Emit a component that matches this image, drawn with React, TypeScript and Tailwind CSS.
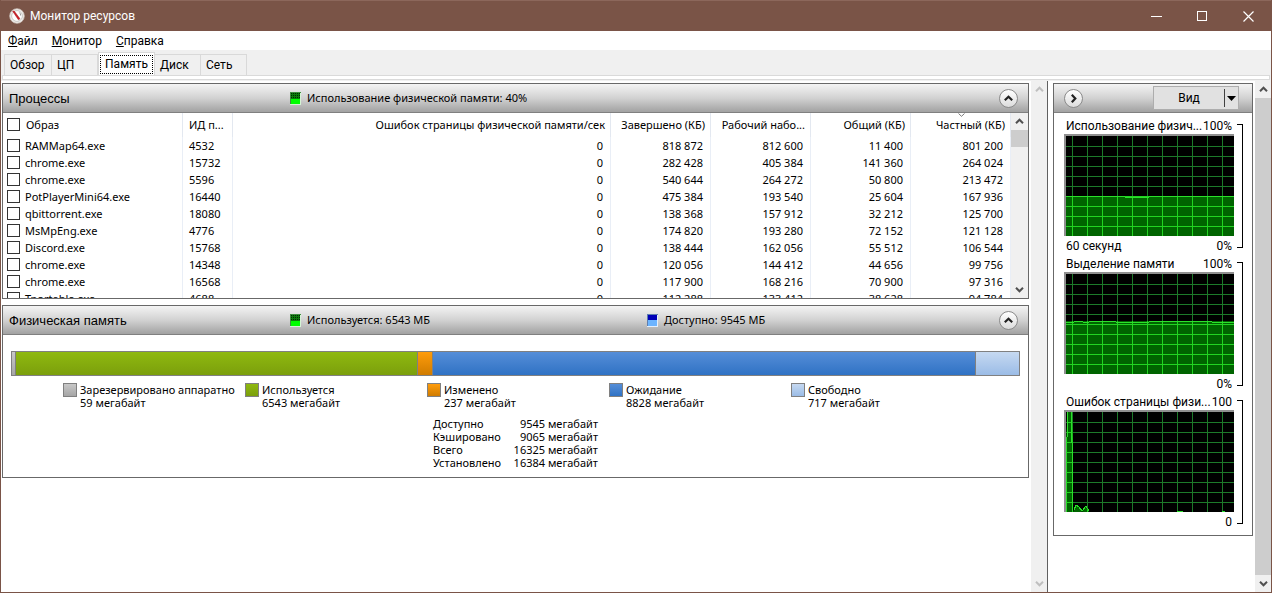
import React from "react";

type Row = [string, string, string, string, string, string, string];

const rows: Row[] = [
  ["RAMMap64.exe", "4532", "0", "818 872", "812 600", "11 400", "801 200"],
  ["chrome.exe", "15732", "0", "282 428", "405 384", "141 360", "264 024"],
  ["chrome.exe", "5596", "0", "540 644", "264 272", "50 800", "213 472"],
  ["PotPlayerMini64.exe", "16440", "0", "475 384", "193 540", "25 604", "167 936"],
  ["qbittorrent.exe", "18080", "0", "138 368", "157 912", "32 212", "125 700"],
  ["MsMpEng.exe", "4776", "0", "174 820", "193 280", "72 152", "121 128"],
  ["Discord.exe", "15768", "0", "138 444", "162 056", "55 512", "106 544"],
  ["chrome.exe", "14348", "0", "120 056", "144 412", "44 656", "99 756"],
  ["chrome.exe", "16568", "0", "117 900", "168 216", "70 900", "97 316"],
  ["Tportable.exe", "4688", "0", "112 288", "133 412", "38 628", "94 784"],
];

const memory = [
  { name: "Зарезервировано аппаратно", mb: 59, fill: "bg-linear-to-b from-[#c8c8c8] to-[#a6a6a6]" },
  { name: "Используется", mb: 6543, fill: "bg-linear-to-b from-[#8fb910] to-[#7b9f0c]" },
  { name: "Изменено", mb: 237, fill: "bg-linear-to-b from-[#ff9c0c] to-[#d07c00]" },
  { name: "Ожидание", mb: 8828, fill: "bg-linear-to-b from-[#558ed8] to-[#2f72c4]" },
  { name: "Свободно", mb: 717, fill: "bg-linear-to-b from-[#c6d9f1] to-[#9bbce6]" },
];
const installed = memory.reduce((sum, m) => sum + m.mb, 0);

const totals = [
  ["Доступно", "9545 мегабайт"],
  ["Кэшировано", "9065 мегабайт"],
  ["Всего", "16325 мегабайт"],
  ["Установлено", "16384 мегабайт"],
];

const headerFill = "bg-linear-to-b from-[#f4f4f4] via-[#d2d2d2] to-[#a2a2a2]";

function AppIcon() {
  return (
    <svg width="16" height="16" viewBox="0 0 16 16" aria-hidden="true">
      <circle cx="8" cy="8" r="7.3" fill="#f2efec" stroke="#c9bfb9" strokeWidth="0.8" />
      <circle cx="8" cy="8" r="5.4" fill="#fff" stroke="#b9bab6" strokeWidth="0.8" />
      <path d="M3.6 3.2 L5.2 3 L11 10.8 L9.4 11.8 Z" fill="#cc1f26" stroke="#a81820" strokeWidth="0.5" />
      <path d="M10.4 4.5 a3.6 3.6 0 0 1 1.2 3" stroke="#9a9a9a" strokeWidth="1" fill="none" />
    </svg>
  );
}

function Chevron({ dir, className }: { dir: "up" | "down"; className: string }) {
  return (
    <svg width="9" height="9" viewBox="0 0 9 9" className={className} aria-hidden="true">
      <path
        d={dir === "up" ? "M1 6.2 L4.5 2.7 L8 6.2" : "M1 2.8 L4.5 6.3 L8 2.8"}
        fill="none"
        stroke="currentColor"
        strokeWidth="2"
      />
    </svg>
  );
}

function RoundButton({ label, dir }: { label: string; dir: "up" | "right" }) {
  return (
    <button
      aria-label={label}
      className="flex size-[19px] shrink-0 items-center justify-center rounded-full border border-[#8a8a8a] bg-linear-to-b from-white to-[#dcdcdc]"
    >
      <svg width="11" height="11" viewBox="0 0 11 11" aria-hidden="true">
        <path
          d={dir === "up" ? "M1.8 7.3 L5.5 3.8 L9.2 7.3" : "M3.8 1.8 L7.3 5.5 L3.8 9.2"}
          fill="none"
          stroke="#222"
          strokeWidth="2.2"
        />
      </svg>
    </button>
  );
}

function GreenIcon() {
  return (
    <svg width="11" height="13" viewBox="0 0 11 13" shapeRendering="crispEdges" aria-hidden="true">
      <rect width="11" height="13" fill="#d4f4d4" />
      <rect width="10" height="12" fill="#00ff00" />
      <rect width="10" height="7" fill="#0b7b0b" />
      {[1, 3, 5].map((y) => (
        <path key={y} d={`M1 ${y + 0.5}H10`} stroke="#002c00" strokeDasharray="1 1" />
      ))}
      <path d="M0 0.5H11M0.5 0V12" stroke="#3f8f3f" />
    </svg>
  );
}

function BlueIcon() {
  return (
    <svg width="11" height="13" viewBox="0 0 11 13" shapeRendering="crispEdges" aria-hidden="true">
      <rect width="11" height="13" fill="#e4effc" />
      <rect width="10" height="12" fill="#6cb4ff" />
      <rect width="10" height="6" fill="#0000b8" />
      <path d="M0 0.5H11M0.5 0V12" stroke="#5f7fae" />
    </svg>
  );
}

function ScrollBar({ className, disabled, thumb }: { className: string; disabled?: boolean; thumb?: string }) {
  const tone = disabled ? "text-[#bfbfbf]" : "text-[#505050]";
  return (
    <div className={`flex shrink-0 flex-col items-center bg-[#f0f0f0] ${className}`}>
      <button aria-label="Вверх" className="flex h-[17px] w-full shrink-0 items-center justify-center">
        <Chevron dir="up" className={tone} />
      </button>
      <div className="flex w-full flex-1 flex-col">{thumb && <div className={`w-full bg-[#cdcdcd] ${thumb}`} />}</div>
      <button aria-label="Вниз" className="flex h-[17px] w-full shrink-0 items-center justify-center">
        <Chevron dir="down" className={tone} />
      </button>
    </div>
  );
}

const columns = [
  { label: "ИД п...", align: "pl-[6px] text-left" },
  { label: "Ошибок страницы физической памяти/сек", align: "pr-[5px] text-right" },
  { label: "Завершено (КБ)", align: "pr-[5px] text-right" },
  { label: "Рабочий набо...", align: "pr-[5px] text-right" },
  { label: "Общий (КБ)", align: "pr-[5px] text-right" },
  { label: "Частный (КБ)", align: "pr-[5px] text-right" },
];

const boxStyle = "block size-[13px] shrink-0 appearance-none border border-[#333] bg-white";

function ProcessTable() {
  return (
    <table className="w-full table-fixed border-separate border-spacing-0 text-[11px] leading-[17px] whitespace-nowrap">
      <colgroup>
        <col className="w-[180px]" />
        <col className="w-[50px]" />
        <col />
        <col className="w-[100px]" />
        <col className="w-[100px]" />
        <col className="w-[100px]" />
        <col className="w-[100px]" />
      </colgroup>
      <thead>
        <tr className="h-[24px]">
          <th className="border-r border-[#e3e8f0] p-0 pb-[2px] text-left font-normal">
            <label className="flex items-center gap-[6px] pl-[4px]">
              <input type="checkbox" className={boxStyle} />
              Образ
            </label>
          </th>
          {columns.map((c, i) => (
            <th key={c.label} className={`relative border-r border-[#e3e8f0] pt-0 pb-[2px] font-normal ${c.align}`}>
              {i === 5 && (
                <svg width="7" height="4" viewBox="0 0 7 4" className="absolute top-0 left-[47px]" aria-hidden="true">
                  <path d="M0.5 0.5 L3.5 3.3 L6.5 0.5" fill="none" stroke="#777" />
                </svg>
              )}
              {c.label}
            </th>
          ))}
        </tr>
      </thead>
      <tbody>
        {rows.map((r, i) => (
          <tr key={i} className="h-[17px]">
            <td className="border-r border-[#e9eef6] p-0">
              <label className="flex items-center gap-[5px] pl-[4px]">
                <input type="checkbox" className={boxStyle} />
                {r[0]}
              </label>
            </td>
            <td className="border-r border-[#e9eef6] py-0 pl-[6px]">{r[1]}</td>
            {r.slice(2).map((v, j) => (
              <td key={j} className="border-r border-[#e9eef6] py-0 pr-[7px] text-right">
                {v}
              </td>
            ))}
          </tr>
        ))}
      </tbody>
    </table>
  );
}

function PanelHeader({ title, children }: { title: string; children: React.ReactNode }) {
  return (
    <header className={`flex h-[29px] shrink-0 items-center border-b border-[#808080] pr-[10px] pl-[6px] ${headerFill}`}>
      <h2 className="w-[281px] shrink-0 pt-[2px] font-['Liberation_Sans',sans-serif] text-[13px]">{title}</h2>
      <div className="flex flex-1 text-[11px]">{children}</div>
      <RoundButton label="Свернуть" dir="up" />
    </header>
  );
}

const gridX = [6, 21, 36, 51, 66, 81, 96, 111, 126, 141, 156];
const gridY = [10, 20, 30, 40, 50, 60, 70, 80, 90];
const gridPath = gridX.map((x) => `M${x + 0.5} 0V100`).join("") + gridY.map((y) => `M0 ${y + 0.5}H168`).join("");

function Graph({
  id,
  title,
  max,
  min,
  span,
  area,
  line,
}: {
  id: string;
  title: string;
  max: string;
  min: string;
  span?: string;
  area: string;
  line: string;
}) {
  return (
    <section className="flex h-[138px] gap-[3px] font-['Roboto',sans-serif] text-[12px]">
      <div className="flex w-[170px] flex-col">
        <div className="flex h-[17px] items-center justify-between pr-[2px] pl-[2px] leading-[16px] whitespace-nowrap">
          <span>{title}</span>
          <span>{max}</span>
        </div>
        <div className="border-t-2 border-l-2 border-[#909090] bg-black">
          <svg
            width="168"
            height="100"
            viewBox="0 0 168 100"
            className="block"
            shapeRendering="crispEdges"
            role="img"
            aria-label={title}
          >
            <clipPath id={id}>
              <path d={area} />
            </clipPath>
            <path d={gridPath} stroke="#1d7a2a" fill="none" />
            <g clipPath={`url(#${id})`}>
              <rect width="168" height="100" fill="#006400" />
              <path d={gridPath} stroke="#22d422" fill="none" />
            </g>
            <path d={line} stroke="#2be02b" fill="none" />
          </svg>
        </div>
        <div className="flex h-[19px] items-center justify-between pr-[2px] pl-[2px]">
          <span>{span}</span>
          <span>{min}</span>
        </div>
      </div>
      <div className="my-[7px] w-[6px] border-y border-r border-black" />
    </section>
  );
}

const inactiveTab = "h-[21px] border-t border-r border-[#d9d9d9] pl-[5px] text-left";

export default function App() {
  return (
    <div className="flex h-screen flex-col border-r border-b border-l border-[#7a5447] bg-white font-['Noto_Sans','Open_Sans',sans-serif] text-[12px] text-black">
      <div className="flex h-[31px] shrink-0 items-center border-t border-[#8c675b] bg-[#7a5447] font-['Roboto',sans-serif] text-white">
        <div className="flex flex-1 items-center gap-[5px] pl-[8px]">
          <AppIcon />
          <h1 className="text-[12px]">Монитор ресурсов</h1>
        </div>
        <button aria-label="Свернуть окно" className="flex h-full w-[46px] items-center justify-center">
          <svg width="11" height="11" viewBox="0 0 11 11" shapeRendering="crispEdges">
            <path d="M0 5.5H11" stroke="#fff" />
          </svg>
        </button>
        <button aria-label="Развернуть" className="flex h-full w-[46px] items-center justify-center">
          <svg width="10" height="10" viewBox="0 0 10 10" shapeRendering="crispEdges">
            <path d="M0.5 0.5H9.5V9.5H0.5Z" stroke="#fff" fill="none" />
          </svg>
        </button>
        <button aria-label="Закрыть" className="flex h-full w-[46px] items-center justify-center">
          <svg width="11" height="11" viewBox="0 0 11 11">
            <path d="M0.5 0.5L10.5 10.5M10.5 0.5L0.5 10.5" stroke="#fff" strokeWidth="1.2" />
          </svg>
        </button>
      </div>

      <nav className="flex h-[19px] shrink-0 items-center gap-[14px] pl-[7px] font-['Roboto',sans-serif]">
        {["Файл", "Монитор", "Справка"].map((m) => (
          <button key={m}>
            <span className="underline">{m[0]}</span>
            {m.slice(1)}
          </button>
        ))}
      </nav>

      <div role="tablist" className="flex h-[25px] shrink-0 items-end bg-[#f0f0f0] pl-[3px] font-['Roboto',sans-serif]">
        <button role="tab" className={`${inactiveTab} w-[48px] border-l`}>Обзор</button>
        <button role="tab" className={`${inactiveTab} w-[46px]`}>ЦП</button>
        <button role="tab" aria-selected="true" className="h-[23px] w-[57px] border-x border-t border-[#d9d9d9] bg-white p-[1px]">
          <span className="flex h-[19px] items-center justify-center border border-dotted border-black">Память</span>
        </button>
        <button role="tab" className={`${inactiveTab} w-[46px]`}>Диск</button>
        <button role="tab" className={`${inactiveTab} w-[46px]`}>Сеть</button>
      </div>
      <div className="shrink-0 bg-[#f0f0f0] px-px pb-px">
        <div className="h-[5px] border border-[#dadada] bg-white" />
      </div>

      <div className="flex min-h-0 flex-1">
        <main className="flex min-w-0 flex-1 flex-col gap-[6px] pt-[2px] pr-[2px] pl-px">
          <section className="flex h-[216px] flex-col border border-[#686868]">
            <PanelHeader title="Процессы">
              <span className="flex items-center gap-[6px]">
                <GreenIcon />
                Использование физической памяти: 40%
              </span>
            </PanelHeader>
            <div className="flex min-h-0 flex-1">
              <div className="min-w-0 flex-1 overflow-hidden">
                <ProcessTable />
              </div>
              <ScrollBar className="w-[17px]" thumb="h-[17px]" />
            </div>
          </section>

          <section className="flex flex-col border border-[#686868]">
            <PanelHeader title="Физическая память">
              <span className="flex w-[357px] items-center gap-[6px]">
                <GreenIcon />
                Используется: 6543 МБ
              </span>
              <span className="flex flex-1 items-center gap-[6px]">
                <BlueIcon />
                Доступно: 9545 МБ
              </span>
            </PanelHeader>
            <div className="px-[8px] pt-[16px] text-[11px] leading-[13px]">
              <div className="flex h-[25px] border-y border-l border-[#808080]">
                {memory.map((m) => (
                  <div
                    key={m.name}
                    className={`border-r border-[#808080] ${m.fill}`}
                    style={{ width: `${(m.mb / installed) * 100}%` }}
                  />
                ))}
              </div>
              <ul className="mt-[7px] flex pl-[52px]">
                {memory.map((m) => (
                  <li key={m.name} className="flex w-[182px] gap-[3px] whitespace-nowrap">
                    <span className={`size-[14px] shrink-0 border border-[#808080] ${m.fill}`} />
                    <span>
                      {m.name}
                      <br />
                      {m.mb} мегабайт
                    </span>
                  </li>
                ))}
              </ul>
              <table className="mt-[8px] mb-[8px] ml-[422px] w-[165px]">
                <tbody>
                  {totals.map(([k, v]) => (
                    <tr key={k}>
                      <td className="p-0">{k}</td>
                      <td className="p-0 text-right">{v}</td>
                    </tr>
                  ))}
                </tbody>
              </table>
            </div>
          </section>
        </main>

        <ScrollBar className="w-[16px]" disabled />

        <aside className="flex w-[224px] shrink-0 justify-between border-l border-[#606060] pl-[5px]">
          <div className="pt-[2px]">
            <section className="w-[200px] border border-[#686868]">
              <header className={`flex h-[29px] items-center justify-between border-b border-[#808080] pr-[13px] pl-[10px] ${headerFill}`}>
                <RoundButton label="Скрыть графики" dir="right" />
                <button className="flex h-[24px] w-[86px] items-center border border-[#adadad] bg-[#e1e1e1] font-['Roboto',sans-serif]">
                  <span className="flex-1 text-center">Вид</span>
                  <span className="flex h-[18px] w-[14px] items-center justify-center border-l border-[#404040]">
                    <svg width="9" height="5" viewBox="0 0 9 5" aria-hidden="true">
                      <path d="M0 0H9L4.5 5Z" fill="#000" />
                    </svg>
                  </span>
                </button>
              </header>
              <div className="pt-[4px] pb-[4px] pl-[10px]">
                <Graph
                  id="used"
                  title="Использование физич..."
                  max="100%"
                  min="0%"
                  span="60 секунд"
                  area="M0 60H168V100H0Z"
                  line="M0 60.5H59M59 61.5H83M83 60.5H168"
                />
                <Graph
                  id="commit"
                  title="Выделение памяти"
                  max="100%"
                  min="0%"
                  area="M0 47H168V100H0Z"
                  line="M0 48.5H8M8 47.5H17M17 48.5H23M23 47.5H50M50 48.5H83M83 47.5H146M146 48.5H168"
                />
                <Graph
                  id="faults"
                  title="Ошибок страницы физи..."
                  max="100"
                  min="0"
                  area="M0 25L2 0H6L7 31V100L10 93L14 96L16 100L20 94L23 100H0Z"
                  line="M0.5 100V25M1.5 25V0M5.5 0V31M6.5 31V99M8 98L10 93L13 95L16 99L20 94L23 99M111 99.5H117M156 99.5H159"
                />
              </div>
            </section>
          </div>
          <ScrollBar className="w-[16px]" thumb="flex-1" />
        </aside>
      </div>
    </div>
  );
}
